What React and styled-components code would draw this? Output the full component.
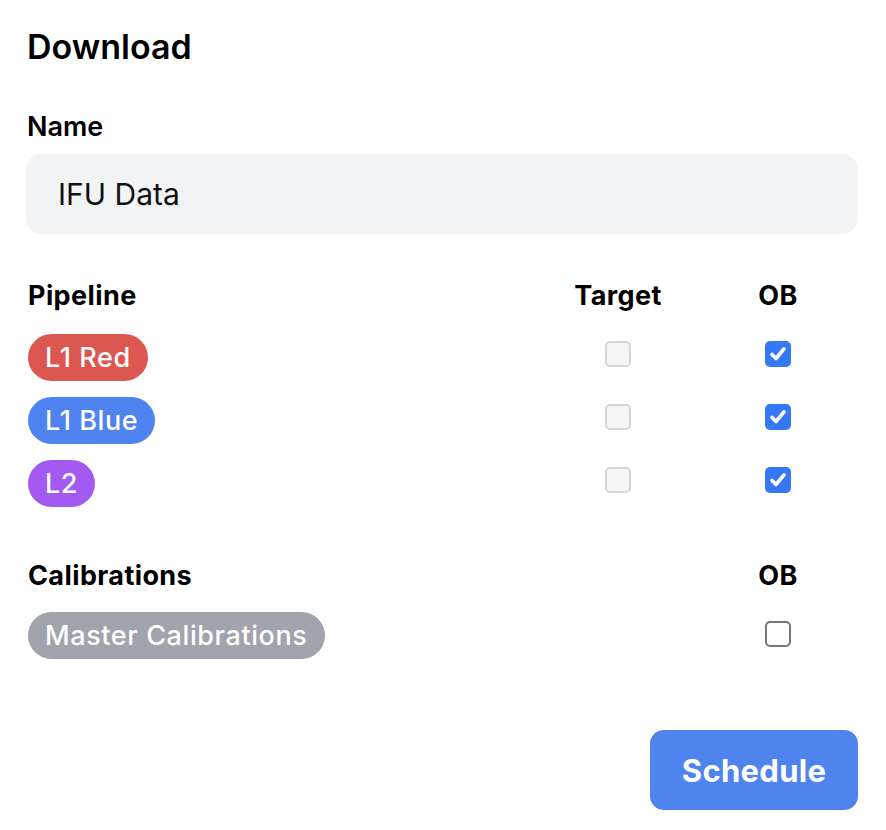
import React, { useState } from 'react';
import styled, { createGlobalStyle } from 'styled-components';

const GlobalStyle = createGlobalStyle`
    html, body {
        margin: 0;
        padding: 0;
        background: #ffffff;
    }
    body {
        font-family: Inter, "Noto Sans", "Liberation Sans", sans-serif;
        color: #000000;
        -webkit-font-smoothing: antialiased;
    }
`;

const Panel = styled.div`
    width: 886px;
    box-sizing: border-box;
    padding: 24px 28px 20px 26px;
    display: flex;
    flex-direction: column;
`;

const Title = styled.h1`
    margin: 0;
    font-size: 34px;
    line-height: 46px;
    font-weight: 600;
    padding-left: 1px;
`;

const FieldLabel = styled.label`
    display: block;
    margin-top: 41px;
    font-size: 27px;
    line-height: 32px;
    font-weight: 600;
    padding-left: 1px;
`;

const TextInput = styled.input`
    margin-top: 11px;
    height: 80px;
    box-sizing: border-box;
    width: 100%;
    border: none;
    border-radius: 16px;
    background: #f2f3f5;
    padding: 0 32px;
    font-family: inherit;
    font-size: 30px;
    color: #111111;
    outline: none;
`;

const Grid = styled.div`
    display: grid;
    grid-template-columns: 1fr 160px 160px;
    align-items: center;
    row-gap: ${props => props.$gap}px;
    margin-top: ${props => props.$top}px;
`;

const HeadCell = styled.div`
    font-size: 27px;
    line-height: 44px;
    font-weight: 700;
    letter-spacing: 0.4px;
    padding-left: ${props => (props.$center ? 0 : 2)}px;
    text-align: ${props => (props.$center ? 'center' : 'left')};
`;

const Cell = styled.div`
    display: flex;
    justify-content: ${props => (props.$center ? 'center' : 'flex-start')};
    align-items: center;
    padding-bottom: ${props => props.$lift || 0}px;
`;

const Pill = styled.span`
    display: inline-flex;
    align-items: center;
    height: 47px;
    padding: 0 17px;
    margin-left: 2px;
    border-radius: 24px;
    background: ${props => props.$bg};
    color: #ffffff;
    font-size: 27px;
    font-weight: 500;
    letter-spacing: 0.6px;
`;

const Box = styled.span`
    width: 26px;
    height: 26px;
    box-sizing: border-box;
    border-radius: 5px;
    display: inline-flex;
    align-items: center;
    justify-content: center;
    cursor: ${props => (props.$disabled ? 'default' : 'pointer')};
    background: ${props => (props.$checked ? '#3478f6' : props.$disabled ? '#f6f6f6' : '#ffffff')};
    border: ${props => (props.$checked ? 'none' : props.$disabled ? '2px solid #d6d6d6' : '2px solid #767676')};
`;

const Footer = styled.div`
    display: flex;
    justify-content: flex-end;
    margin-top: 71px;
`;

const ScheduleButton = styled.button`
    width: 208px;
    height: 80px;
    border: none;
    border-radius: 14px;
    background: #4f84ee;
    color: #ffffff;
    font-family: inherit;
    font-size: 31px;
    font-weight: 700;
    letter-spacing: 0.3px;
    cursor: pointer;
`;

function Check({ checked, disabled, onToggle }) {
    return (
        <Box $checked={checked} $disabled={disabled} onClick={disabled ? undefined : onToggle}>
            {checked && (
                <svg width="20" height="20" viewBox="0 0 20 20">
                    <path d="M4 10.5 L8 14.5 L16 4.8" fill="none" stroke="#ffffff" strokeWidth="3.6" strokeLinecap="round" strokeLinejoin="round" />
                </svg>
            )}
        </Box>
    );
}

const pipelines = [
    { id: 'l1red', label: 'L1 Red', color: '#dc574f' },
    { id: 'l1blue', label: 'L1 Blue', color: '#4f83ef' },
    { id: 'l2', label: 'L2', color: '#a25af1' },
];

export default function App() {
    const [name, setName] = useState('IFU Data');
    const [ob, setOb] = useState({ l1red: true, l1blue: true, l2: true });
    const [master, setMaster] = useState(false);

    return (
        <>
            <GlobalStyle />
            <Panel>
                <Title>Download</Title>
                <FieldLabel htmlFor="dlName">Name</FieldLabel>
                <TextInput id="dlName" value={name} onChange={(e) => setName(e.target.value)} />

                <Grid $top={40} $gap={16}>
                    <HeadCell>Pipeline</HeadCell>
                    <HeadCell $center>Target</HeadCell>
                    <HeadCell $center>OB</HeadCell>
                    {pipelines.map((p) => (
                        <React.Fragment key={p.id}>
                            <Cell><Pill $bg={p.color}>{p.label}</Pill></Cell>
                            <Cell $center $lift={8}><Check disabled /></Cell>
                            <Cell $center $lift={8}>
                                <Check checked={ob[p.id]} onToggle={() => setOb({ ...ob, [p.id]: !ob[p.id] })} />
                            </Cell>
                        </React.Fragment>
                    ))}
                </Grid>

                <Grid $top={47} $gap={14}>
                    <HeadCell>Calibrations</HeadCell>
                    <HeadCell />
                    <HeadCell $center>OB</HeadCell>
                    <Cell><Pill $bg="#a1a4ad">Master Calibrations</Pill></Cell>
                    <Cell />
                    <Cell $center $lift={4}><Check checked={master} onToggle={() => setMaster(!master)} /></Cell>
                </Grid>

                <Footer>
                    <ScheduleButton>Schedule</ScheduleButton>
                </Footer>
            </Panel>
        </>
    );
}
